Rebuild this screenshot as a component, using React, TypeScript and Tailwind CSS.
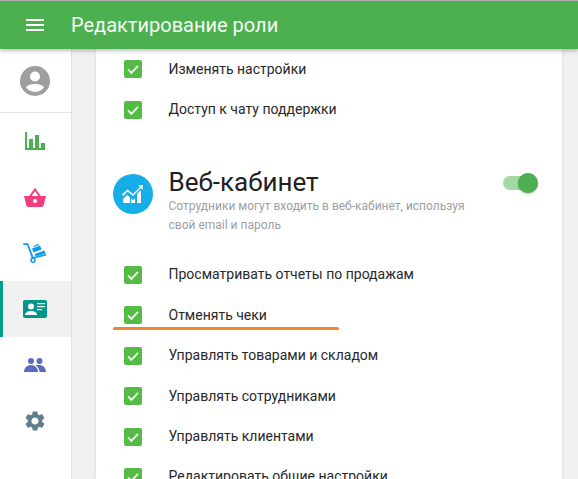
import React from "react";

const Check = () => (
  <span className="w-[18px] h-[18px] rounded-[2px] bg-[#54bb45] flex items-center justify-center shrink-0">
    <svg width="14" height="14" viewBox="0 0 14 14" fill="none"><path d="M2 7.4 L5.4 10.8 L12 3.8" stroke="#eef8ec" strokeWidth="1.9" /></svg>
  </span>
);

const Row = ({ text }: { text: string }) => (
  <div className="flex items-center h-[40.4px]">
    <Check />
    <span className="ml-[26.500px] text-[14px] text-[#28282a] whitespace-nowrap">{text}</span>
  </div>
);

const NavSlot = ({ children }: { children: React.ReactNode }) => (
  <div className="h-[56px] shrink-0 flex items-center justify-center pr-[1px]">{children}</div>
);

export default function App() {
  return (
    <div className="w-[578px] h-[479px] overflow-hidden flex flex-col bg-[#f1f1f1] font-['Roboto',sans-serif]">
      <div className="h-[1px] bg-[#b5b5b5] shrink-0" />
      <header className="relative z-10 h-[48px] shrink-0 bg-[#4caf50] flex items-center shadow-[0_2px_4px_rgba(0,0,0,0.25)] text-white">
        <svg className="ml-[26px]" width="18" height="12" viewBox="0 0 18 12" fill="#fff"><path d="M0 0h18v2H0zM0 5h18v2H0zM0 10h18v2H0z" /></svg>
        <h1 className="ml-[27px] text-[20px] font-normal text-[#f4fbf4]">Редактирование роли</h1>
      </header>
      <div className="flex flex-1 min-h-0">
        <aside className="w-[71px] shrink-0 bg-white flex flex-col shadow-[1px_0_1px_rgba(0,0,0,0.06)]">
          <div className="h-[64px] shrink-0 border-b border-[#e2e2e2] flex items-center justify-center pr-[1px]">
            <svg width="30" height="30" viewBox="0 0 30 30"><circle cx="15" cy="15" r="15" fill="#9e9e9e" /><circle cx="15" cy="10.500" r="5" fill="#fff" /><path d="M15 18c-4.400 0-8.300 1.600-9 3.600 2 2.700 5.300 4.400 9 4.400s7-1.700 9-4.400c-.7-2-4.600-3.600-9-3.600z" fill="#fff" /></svg>
          </div>
          <NavSlot>
            <svg width="20" height="18" viewBox="0 0 20 18" fill="#4caf50"><path d="M0 0h2v16h2V7h4v9h2V3h4v13h2v-5h4v7H0z" /></svg>
          </NavSlot>
          <NavSlot>
            <svg width="22" height="19" viewBox="0 0 22 19"><path d="M0 8h22l-2.400 9.500A2 2 0 0 1 17.700 19H4.300a2 2 0 0 1-1.900-1.500z" fill="#f23d7e" /><path d="M6 8.500 11 1.500l5 7" fill="none" stroke="#f23d7e" strokeWidth="2" /><circle cx="11" cy="13" r="2" fill="#fff" /></svg>
          </NavSlot>
          <NavSlot>
            <svg width="24" height="20" viewBox="0 0 24 20" fill="#0f9bee"><path d="M0 .5 5 0l5.500 14 12.500-3 .5 1.500-14.500 3.500L4 2 .5 2.200z" /><circle cx="10" cy="17.200" r="2" fill="none" stroke="#0f9bee" strokeWidth="1.500" /><path d="m9 5.500 8-3 1.500 4-8 3zM11.500 11l10-3.500 1.200 3-9.700 3zM10.500 3 14 1.500 15 .5l1 1.500-5 2z" /></svg>
          </NavSlot>
          <div className="h-14 shrink-0 flex items-center justify-center bg-[#f1f1f1] border-l-[3px] border-[#009e87] pr-[4px]">
            <svg width="24" height="18" viewBox="0 0 24 18"><rect width="24" height="18" rx="2" fill="#009688" /><circle cx="8" cy="6.500" r="3" fill="#fff" /><path d="M2 15c0-2.500 3-4 6-4s6 1.500 6 4z" fill="#fff" /><path d="M14 3h8v1.300h-8zM14 6h8v1.300h-8zM14 9h5v1.300h-5z" fill="#fff" /></svg>
          </div>
          <NavSlot>
            <svg width="22" height="14" viewBox="0 0 22 14" fill="#5c6bc0"><circle cx="7" cy="3" r="3" /><circle cx="15.500" cy="3" r="3" /><path d="M0 14c0-4 3-7 7-7s7 3 7 7z" /><path d="M11.500 7.300c1-.4 2.700-.3 4-.3 3.500 0 6.500 3 6.500 7h-6.500c0-2.500-1.500-5.200-4-6.700z" /></svg>
          </NavSlot>
          <NavSlot>
            <svg width="20" height="20" viewBox="2 2 20 20" fill="#607d8b"><path d="M19.140 12.940c.04-.3.060-.61.060-.94 0-.32-.020-.64-.070-.94l2.030-1.580a.49.490 0 0 0 .120-.610l-1.920-3.320a.49.490 0 0 0-.590-.220l-2.390.960c-.5-.380-1.030-.700-1.620-.940l-.360-2.540a.480.480 0 0 0-.480-.410h-3.840c-.240 0-.430.170-.470.410l-.360 2.540c-.590.240-1.130.570-1.620.940l-2.390-.960c-.220-.080-.470 0-.590.220L2.740 8.870c-.120.210-.080.470.120.610l2.030 1.580c-.050.300-.090.630-.090.940s.020.640.070.940l-2.030 1.580a.49.490 0 0 0-.120.610l1.920 3.320c.120.220.370.290.590.220l2.390-.960c.500.380 1.030.700 1.620.940l.360 2.540c.050.240.240.410.480.410h3.840c.240 0 .440-.170.470-.410l.360-2.540c.590-.240 1.130-.560 1.620-.940l2.390.960c.220.080.470 0 .590-.220l1.920-3.320c.120-.220.070-.470-.120-.610l-2.010-1.580zM12 15.600c-1.980 0-3.600-1.620-3.600-3.600s1.620-3.600 3.600-3.600 3.600 1.620 3.600 3.600-1.620 3.600-3.600 3.600z" /></svg>
          </NavSlot>
        </aside>
        <main className="ml-[25px] w-[466px] bg-white shrink-0 pl-[28px] pr-[23px] shadow-[0_0_3px_rgba(0,0,0,0.12)] overflow-hidden">
          <Row text="Изменять настройки" />
          <Row text="Доступ к чату поддержки" />
          <section className="mt-[38px] flex -ml-[11px]">
            <div className="w-10 h-10 mt-[6px] rounded-full bg-[#15aee8] flex items-center justify-center shrink-0">
              <svg width="22" height="18" viewBox="0 0 22 18" fill="#fff"><path d="M1 18v-4l4-4 3 2.500V18zM9 18v-4.500l2 1.500 2-2V18zM15 18V9l4-4v13z" /><path d="m0 9.500 5.500-5L11 9l7-7-2-1.500L21 0l-.5 5-1.500-2-8 8-5.500-4.500L1 11z" /></svg>
            </div>
            <div className="ml-[15.500px] flex-1">
              <h2 className="text-[26px] leading-[29px] font-normal text-[#212121]">Веб-кабинет</h2>
              <p className="w-[310px] text-[12px] leading-[19px] text-[#9e9ea4]">Сотрудники могут входить в веб-кабинет, используя свой email и пароль</p>
            </div>
            <div className="relative w-[32px] h-[14px] rounded-full bg-[#a5d8a7] mt-[8px] mr-[4px] shrink-0">
              <span className="absolute -right-[3px] -top-[3px] w-5 h-5 rounded-full bg-[#4caf50] shadow-[0_1px_2px_rgba(0,0,0,0.3)]" />
            </div>
          </section>
          <div className="mt-[20px]">
            <Row text="Просматривать отчеты по продажам" />
            <div className="relative">
              <Row text="Отменять чеки" />
              <span className="absolute left-[-11px] top-[32px] w-[226px] h-[3px] rounded-full bg-[#f58233]" />
            </div>
            <Row text="Управлять товарами и складом" />
            <Row text="Управлять сотрудниками" />
            <Row text="Управлять клиентами" />
            <Row text="Редактировать общие настройки" />
          </div>
        </main>
      </div>
    </div>
  );
}
